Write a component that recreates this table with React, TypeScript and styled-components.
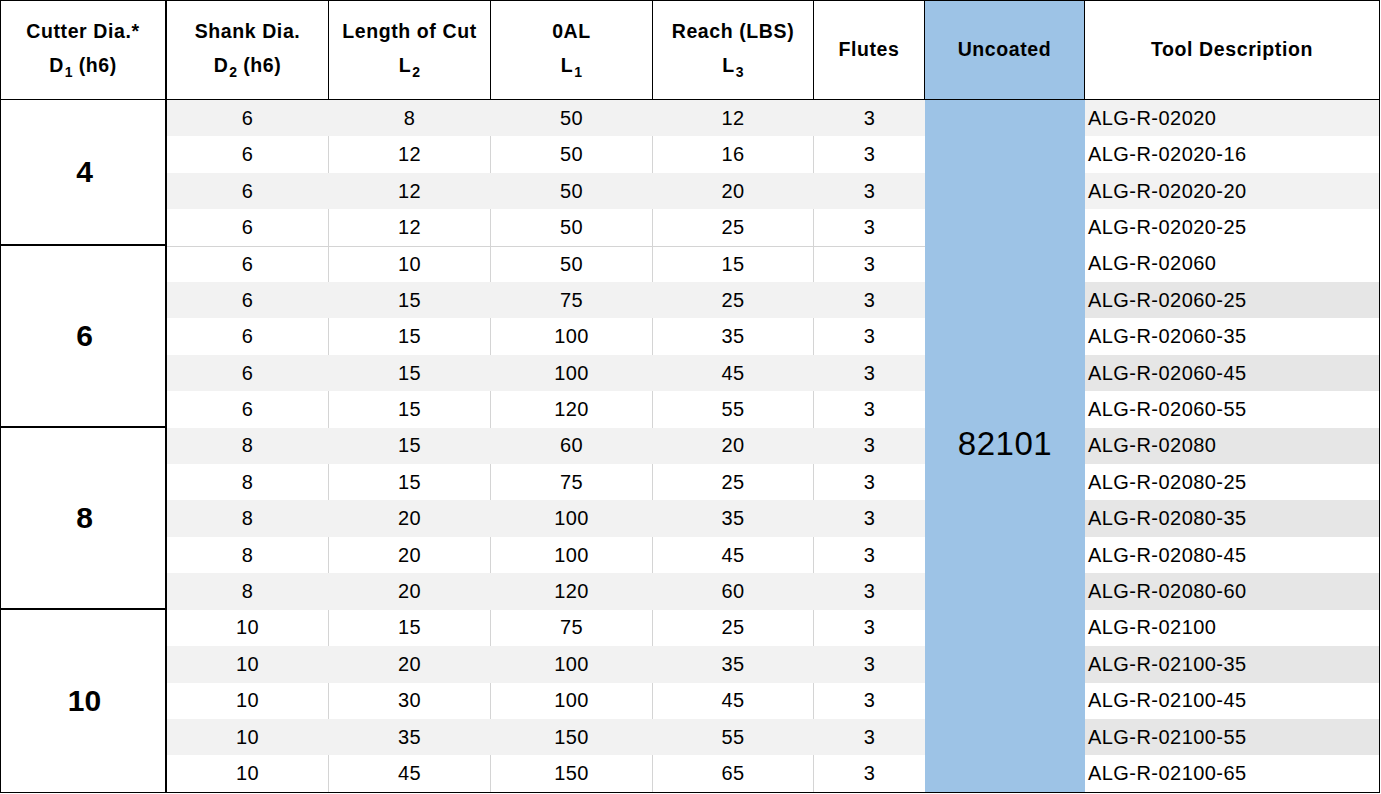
import React from 'react'
import styled, { createGlobalStyle } from 'styled-components'

const GlobalStyle = createGlobalStyle`
  html, body {
    margin: 0;
    padding: 0;
    background: #ffffff;
  }
  body {
    font-family: "Liberation Sans", Arial, sans-serif;
    color: #000;
  }
`

const Sheet = styled.div`
  display: grid;
  grid-template-columns: 166px 162px 162px 162px 161px 111px 160px 294px;
  grid-template-rows: 99px repeat(19, 36.42px);
  width: 1380px;
  box-sizing: border-box;
  border: 1px solid #000;
`

const HeadCell = styled.div<{ $blue?: boolean; $thick?: boolean; $last?: boolean }>`
  display: flex;
  flex-direction: column;
  align-items: center;
  justify-content: center;
  box-sizing: border-box;
  background: ${({ $blue }) => ($blue ? '#9dc3e6' : '#ffffff')};
  border-bottom: 1px solid #000;
  border-right: ${({ $thick, $last }) => ($last ? 'none' : $thick ? '2px solid #000' : '1px solid #000')};
  font-weight: 700;
  font-size: 19.5px;
  letter-spacing: 0.6px;
  line-height: 34px;
  text-align: center;
  padding-bottom: 3px;
`

const Sub = styled.span`
  font-size: 14px;
  letter-spacing: 0;
  position: relative;
  top: 5px;
  margin-left: 1px;
`

const GroupCell = styled.div<{ $span: number; $last?: boolean }>`
  grid-row: span ${({ $span }) => $span};
  display: flex;
  align-items: center;
  justify-content: center;
  box-sizing: border-box;
  border-right: 2px solid #000;
  border-bottom: ${({ $last }) => ($last ? 'none' : '2px solid #000')};
  font-weight: 700;
  font-size: 30px;
  padding-left: 3px;
`

const Cell = styled.div<{ $shade: boolean; $line?: boolean; $topLine?: boolean }>`
  display: flex;
  align-items: center;
  justify-content: center;
  box-sizing: border-box;
  background: ${({ $shade }) => ($shade ? '#f2f2f2' : '#ffffff')};
  border-right: ${({ $line, $shade }) => ($line ? `1px solid ${$shade ? '#f2f2f2' : '#d4d4d4'}` : 'none')};
  border-top: ${({ $topLine }) => ($topLine ? '1px solid #d4d4d4' : 'none')};
  font-size: 20px;
  letter-spacing: 0.4px;
`

const Coating = styled.div`
  grid-row: span 19;
  display: flex;
  align-items: center;
  justify-content: center;
  background: #9dc3e6;
  font-size: 33px;
  letter-spacing: 0.5px;
  padding-bottom: 4px;
`

const DescCell = styled.div<{ $tone: 'none' | 'light' | 'mid' }>`
  display: flex;
  align-items: center;
  box-sizing: border-box;
  padding-left: 3px;
  background: ${({ $tone }) => ($tone === 'light' ? '#f2f2f2' : $tone === 'mid' ? '#e6e6e6' : '#ffffff')};
  font-size: 20px;
  letter-spacing: 0.45px;
`

type Row = [number, number, number, number, number, string]

const groups: { dia: number; rows: Row[] }[] = [
  {
    dia: 4,
    rows: [
      [6, 8, 50, 12, 3, 'ALG-R-02020'],
      [6, 12, 50, 16, 3, 'ALG-R-02020-16'],
      [6, 12, 50, 20, 3, 'ALG-R-02020-20'],
      [6, 12, 50, 25, 3, 'ALG-R-02020-25'],
    ],
  },
  {
    dia: 6,
    rows: [
      [6, 10, 50, 15, 3, 'ALG-R-02060'],
      [6, 15, 75, 25, 3, 'ALG-R-02060-25'],
      [6, 15, 100, 35, 3, 'ALG-R-02060-35'],
      [6, 15, 100, 45, 3, 'ALG-R-02060-45'],
      [6, 15, 120, 55, 3, 'ALG-R-02060-55'],
    ],
  },
  {
    dia: 8,
    rows: [
      [8, 15, 60, 20, 3, 'ALG-R-02080'],
      [8, 15, 75, 25, 3, 'ALG-R-02080-25'],
      [8, 20, 100, 35, 3, 'ALG-R-02080-35'],
      [8, 20, 100, 45, 3, 'ALG-R-02080-45'],
      [8, 20, 120, 60, 3, 'ALG-R-02080-60'],
    ],
  },
  {
    dia: 10,
    rows: [
      [10, 15, 75, 25, 3, 'ALG-R-02100'],
      [10, 20, 100, 35, 3, 'ALG-R-02100-35'],
      [10, 30, 100, 45, 3, 'ALG-R-02100-45'],
      [10, 35, 150, 55, 3, 'ALG-R-02100-55'],
      [10, 45, 150, 65, 3, 'ALG-R-02100-65'],
    ],
  },
]

// shaded rows, by running index
const shaded = new Set([0, 2, 5, 7, 9, 11, 13, 15, 17])

export default function App() {
  let idx = 0
  const body: React.ReactNode[] = []

  groups.forEach((g, gi) => {
    g.rows.forEach((r, ri) => {
      const i = idx++
      const shade = shaded.has(i)
      const topLine = i === 4
      if (ri === 0) {
        body.push(
          <GroupCell key={`g${gi}`} $span={g.rows.length} $last={gi === groups.length - 1}>
            {g.dia}
          </GroupCell>
        )
      }
      r.slice(0, 5).forEach((v, ci) => {
        body.push(
          <Cell key={`c${i}-${ci}`} $shade={shade} $line={ci < 4} $topLine={topLine}>
            {v}
          </Cell>
        )
      })
      if (i === 0) body.push(<Coating key="coat">82101</Coating>)
      body.push(
        <DescCell key={`d${i}`} $tone={!shade ? 'none' : gi === 0 ? 'light' : 'mid'}>
          {r[5]}
        </DescCell>
      )
    })
  })

  return (
    <>
      <GlobalStyle />
      <Sheet>
        <HeadCell $thick>
          <span>Cutter Dia.*</span>
          <span>D<Sub>1</Sub> (h6)</span>
        </HeadCell>
        <HeadCell>
          <span>Shank Dia.</span>
          <span>D<Sub>2</Sub> (h6)</span>
        </HeadCell>
        <HeadCell>
          <span>Length of Cut</span>
          <span>L<Sub>2</Sub></span>
        </HeadCell>
        <HeadCell>
          <span>0AL</span>
          <span>L<Sub>1</Sub></span>
        </HeadCell>
        <HeadCell>
          <span>Reach (LBS)</span>
          <span>L<Sub>3</Sub></span>
        </HeadCell>
        <HeadCell>Flutes</HeadCell>
        <HeadCell $blue>Uncoated</HeadCell>
        <HeadCell $last>Tool Description</HeadCell>
        {body}
      </Sheet>
    </>
  )
}
